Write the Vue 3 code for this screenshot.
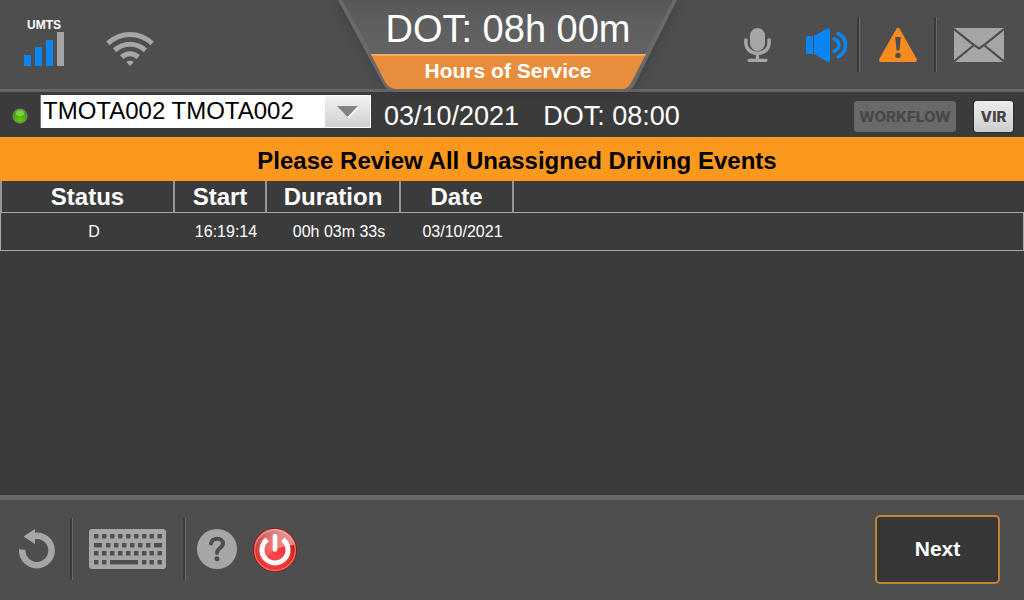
<script setup>
import { ref } from 'vue'

const drivers = ['TMOTA002 TMOTA002']
const driver = ref(drivers[0])
const columns = ['Status', 'Start', 'Duration', 'Date']
const events = [
  { status: 'D', start: '16:19:14', duration: '00h 03m 33s', date: '03/10/2021' }
]

const row = (y, xs) => xs.map((x) => ({ x, y, w: 4.4 }))
const even = [5, 13, 21, 29, 37, 45, 53, 60.500, 68.500]
const keys = [
  ...row(5, even),
  { x: 5, y: 14, w: 8 },
  ...row(14, [17, 25, 33, 41, 49, 57]),
  { x: 65, y: 14, w: 8 },
  ...row(22, even),
  ...row(31, [5, 13]),
  { x: 21, y: 31, w: 28 },
  ...row(31, [53, 60.500, 68.500])
]
</script>

<template>
  <div class="screen">
    <header class="top">
      <div class="signals">
        <div class="cell">
          <span>UMTS</span>
          <svg width="40" height="34" viewBox="0 0 40 34" aria-hidden="true">
            <path fill="#0a86f0" d="M0 23h7v11H0zM11 15h7v19h-7zM22 8h7v26h-7z" />
            <path fill="#a6a6a6" d="M33 0h7v34h-7z" />
          </svg>
        </div>
        <svg class="wifi" width="48" height="34" viewBox="0 0 48 34" aria-hidden="true">
          <g fill="none" stroke="#a6a6a6" stroke-width="5">
            <path d="M1.8 11.4Q11.5 2.5 24 2.5T46.2 11.4" />
            <path d="M8.7 18.3Q15.5 12.2 24 12.2T39.3 18.3" />
            <path d="M15.7 25Q19.5 21.7 24 21.7T32.3 25" />
          </g>
          <path fill="#a6a6a6" d="M20.3 30Q24 27.6 27.7 30L24 34z" />
        </svg>
      </div>

      <div class="clock">
        <svg class="shape" width="338" height="92" viewBox="0 0 338 92" aria-hidden="true">
          <defs>
            <linearGradient id="plate" x1="0" y1="0" x2="0" y2="1">
              <stop offset="0" stop-color="#585858" />
              <stop offset=".45" stop-color="#5f5f5f" />
              <stop offset="1" stop-color="#636363" />
            </linearGradient>
            <filter id="shade" x="-20%" y="-20%" width="140%" height="140%">
              <feGaussianBlur stdDeviation="6" />
            </filter>
          </defs>
          <path fill="#000" opacity=".2" filter="url(#shade)" d="M-2 0L45 82Q49 89 57 89H287Q294 89 298 82L340 0z" />
          <path fill="#696969" d="M0 0L45 84Q49 92 59 92H284Q293 92 297 84L339 0z" />
          <path fill="url(#plate)" d="M4 0L34 54H307L335 0z" />
          <path fill="#e88d3b" d="M33 54H308L293 83Q290 89 284 89H58Q51 89 47 82z" />
          <path fill="#fbab5c" d="M33 54H308L307 56H34z" />
        </svg>
        <div class="time">DOT: 08h 00m</div>
        <div class="label">Hours of Service</div>
      </div>

      <div class="alerts">
        <button class="mic" aria-label="Voice">
          <svg width="27" height="34" viewBox="0 0 27 34">
            <rect x="6" y="0" width="15" height="23" rx="7.5" fill="#a6a6a6" />
            <g fill="none" stroke="#a6a6a6" stroke-width="3.6" stroke-linecap="round">
              <path d="M1.9 12v2.5c0 14.5 23.2 14.5 23.2 0V12" />
              <path d="M13.5 26v6M5 32.3h17" stroke-width="3.2" />
            </g>
          </svg>
        </button>
        <button class="sound" aria-label="Volume">
          <svg width="42" height="34" viewBox="0 0 42 34">
            <path fill="#0a86f0" d="M0 9.5Q0 8 1.5 8H7V26H1.5Q0 26 0 24.500zM8 8L21 .6Q24-.8 24 2V32Q24 34.800 21 33.400L8 26z" />
            <g fill="none" stroke="#0a86f0" stroke-width="3.6" stroke-linecap="round">
              <path d="M28 11Q33 13 33 17T28 23.500" />
              <path d="M32 5.500Q39.500 9 39.500 17T32 29" />
            </g>
          </svg>
        </button>
        <i class="rule"></i>
        <button class="warn" aria-label="Warnings">
          <svg width="38" height="34" viewBox="0 0 38 34">
            <path fill="#f98b21" stroke="#f98b21" stroke-width="4" stroke-linejoin="round" d="M19 2L2 32H36z" />
            <path fill="#4e4e4e" d="M16.200 9H21.800L20.500 22.500H17.500z" />
            <circle cx="19" cy="27.500" r="2.700" fill="#4e4e4e" />
          </svg>
        </button>
        <i class="rule"></i>
        <button class="mail" aria-label="Messages">
          <svg width="50" height="34" viewBox="0 0 50 34">
            <path fill="#a6a6a6" d="M0 0H50V34H0z" />
            <path fill="none" stroke="#4e4e4e" stroke-width="2.200" d="M0 1L20 17L25 20.500L30 17L50 1M0 33.500L20 17M50 33.500L30 17" />
          </svg>
        </button>
      </div>
    </header>

    <div class="driverbar">
      <svg class="led" width="16" height="16" viewBox="0 0 16 16" aria-hidden="true">
        <defs>
          <radialGradient id="green" cx=".5" cy=".75" r=".7">
            <stop offset="0" stop-color="#62cc08" />
            <stop offset="1" stop-color="#2f9400" />
          </radialGradient>
        </defs>
        <circle cx="8" cy="8" r="7" fill="url(#green)" stroke="#7f8c7a" />
        <ellipse cx="8" cy="5" rx="4.500" ry="3" fill="#b6e77c" opacity=".55" />
      </svg>
      <div class="picker">
        <select v-model="driver" aria-label="Driver">
          <option v-for="d in drivers" :key="d">{{ d }}</option>
        </select>
        <span class="arrow">
          <svg width="22" height="12" viewBox="0 0 22 12" aria-hidden="true">
            <path fill="#fff" d="M2 1H22L12 12z" />
            <path fill="#828282" d="M0 0H21L10.500 11z" />
          </svg>
        </span>
      </div>
      <span class="date">03/10/2021</span>
      <span class="dot">DOT: 08:00</span>
      <button class="small workflow" disabled>WORKFLOW</button>
      <button class="small vir">VIR</button>
    </div>

    <div class="banner" role="alert">Please Review All Unassigned Driving Events</div>

    <main>
      <table>
        <colgroup>
          <col class="c-status" /><col class="c-start" /><col class="c-duration" /><col class="c-date" /><col />
        </colgroup>
        <thead>
          <tr>
            <th v-for="c in columns" :key="c" scope="col">{{ c }}</th>
            <td></td>
          </tr>
        </thead>
        <tbody>
          <tr v-for="e in events" :key="e.start">
            <td>{{ e.status }}</td>
            <td>{{ e.start }}</td>
            <td>{{ e.duration }}</td>
            <td>{{ e.date }}</td>
            <td></td>
          </tr>
        </tbody>
      </table>
    </main>

    <footer>
      <button class="back" aria-label="Back">
        <svg width="36" height="40" viewBox="0 0 36 40">
          <path fill="none" stroke="#a6a6a6" stroke-width="6.500" d="M3.200 20.500A14.700 14.700 0 1 0 15.500 7" />
          <path fill="#a6a6a6" d="M4.500 7.500L16 0V15z" />
        </svg>
      </button>
      <i class="rule"></i>
      <button class="keyboard" aria-label="Keyboard">
        <svg width="77" height="40" viewBox="0 0 77 40">
          <rect width="77" height="40" rx="3" fill="#a6a6a6" />
          <rect v-for="(k, i) in keys" :key="i" :x="k.x" :y="k.y" :width="k.w" height="4.400" fill="#4e4e4e" />
        </svg>
      </button>
      <i class="rule"></i>
      <button class="help" aria-label="Help">
        <svg width="40" height="40" viewBox="0 0 40 40">
          <circle cx="20" cy="20" r="20" fill="#a6a6a6" />
          <path fill="none" stroke="#4e4e4e" stroke-width="4" stroke-linecap="round" d="M14 14.500C14.500 8 26 8 26 14.500C26 19 20 19 20 24" />
          <circle cx="20" cy="29.800" r="2.500" fill="#4e4e4e" />
        </svg>
      </button>
      <button class="power" aria-label="Power">
        <svg width="46" height="46" viewBox="0 0 46 46">
          <defs>
            <radialGradient id="red" cx=".5" cy=".65" r=".55">
              <stop offset="0" stop-color="#ff4b4b" />
              <stop offset=".6" stop-color="#e33" />
              <stop offset="1" stop-color="#b81414" />
            </radialGradient>
            <linearGradient id="gloss" x1=".2" y1="1" x2=".9" y2=".1">
              <stop offset="0" stop-color="#fff" stop-opacity="0" />
              <stop offset="1" stop-color="#fff" stop-opacity=".6" />
            </linearGradient>
          </defs>
          <circle cx="23" cy="23" r="21.500" fill="url(#red)" stroke="#8a1408" stroke-width="1" />
          <circle cx="23" cy="23" r="20.400" fill="none" stroke="#f0685f" stroke-width="1.500" />
          <path fill="url(#gloss)" d="M3 21A20 20 0 0 1 42.500 18Q30 19 23 23T10 37A20 20 0 0 1 3 21z" />
          <path fill="none" stroke="#fff" stroke-width="5" d="M15.200 12.500A13 13 0 1 0 30.800 12.500" />
          <path stroke="#fff" stroke-width="4.600" stroke-linecap="round" d="M23 9V22.500" />
        </svg>
      </button>
      <button class="next">Next</button>
    </footer>
  </div>
</template>

<style>
body {
  background: #3b3b3b;
}
</style>

<style scoped>
.screen {
  display: flex;
  flex-direction: column;
  min-height: 100vh;
  background: #3b3b3b;
  color: #fff;
  font-family: "Liberation Sans", Arial, sans-serif;
}
button {
  padding: 0;
  border: 0;
  background: none;
  font-family: inherit;
  color: inherit;
}
svg {
  display: block;
  flex: none;
}
.top {
  display: grid;
  grid-template-columns: 1fr 338px 1fr;
  box-sizing: border-box;
  height: 92px;
  padding-right: 10px;
  background: #4e4e4e;
  border-bottom: 3px solid #666;
}
.signals {
  display: flex;
  align-items: flex-end;
  gap: 42px;
  padding: 0 0 23px 24px;
}
.cell span {
  display: block;
  text-align: center;
  font-weight: bold;
  font-size: 12px;
  line-height: 14px;
}
.clock {
  position: relative;
  text-align: center;
}
.shape {
  position: absolute;
  left: 0;
  top: 0;
  overflow: visible;
}
.time {
  position: relative;
  padding: 6px 0 0 2px;
  font-size: 38px;
  line-height: 46px;
}
.label {
  position: relative;
  padding: 6px 0 0 2px;
  font-size: 21px;
  font-weight: bold;
  line-height: 26px;
}
.alerts {
  display: flex;
  align-items: center;
  justify-content: flex-end;
  padding-right: 10px;
}
.rule {
  width: 1px;
  height: 55px;
  border-left: 2px solid #3c3c3c;
  background: #6a6a6a;
}
.sound {
  margin: 0 9px 0 35px;
}
.warn {
  margin: 0 17px 0 19px;
}
.mail {
  margin-left: 17px;
}
.driverbar {
  display: flex;
  align-items: center;
  box-sizing: border-box;
  height: 45px;
  padding: 3px 11px 0 12px;
  font-size: 27px;
  line-height: 34px;
}
.picker {
  position: relative;
  align-self: flex-start;
  width: 331px;
  height: 33px;
  margin: 0 13px 0 12px;
}
.picker select {
  appearance: none;
  display: block;
  width: 100%;
  height: 100%;
  padding: 0 48px 2px 2px;
  border: 0;
  border-left: 1px solid #777;
  border-radius: 0;
  background: #fff;
  color: #000;
  font: 24px "Liberation Sans", Arial, sans-serif;
}
.arrow {
  position: absolute;
  right: 1px;
  top: 1px;
  bottom: 1px;
  display: flex;
  align-items: center;
  justify-content: center;
  width: 45px;
  background: linear-gradient(#f3f3f3, #cfcfcf);
  pointer-events: none;
}
.date {
  margin-right: 24px;
}
.small {
  height: 31px;
  margin-top: 1px;
  border-radius: 3px;
  font: 800 15px Inter, sans-serif;
}
.workflow {
  width: 102px;
  margin-left: auto;
  background: #696969;
  color: #484848;
}
.vir {
  width: 39px;
  margin-left: 18px;
  background: linear-gradient(#ececec, #cdcdcd);
  color: #444;
  box-shadow: 0 0 2px #111;
}
.banner {
  padding: 4px 0 0 10px;
  background: #fb991e;
  color: #000;
  font-size: 24px;
  font-weight: bold;
  line-height: 40px;
  text-align: center;
}
main {
  flex: 1;
}
table {
  width: 100%;
  table-layout: fixed;
  border-spacing: 0;
}
.c-status { width: 173px; }
.c-start { width: 92px; }
.c-duration { width: 134px; }
.c-date { width: 113px; }
th,
td {
  padding: 0;
  text-align: center;
}
thead th,
thead td {
  height: 31px;
  border-left: 2px solid #979797;
  border-bottom: 1px solid #a8a8a8;
  font-size: 24px;
  line-height: 31px;
}
tbody td {
  height: 37px;
  padding-left: 14px;
  border-bottom: 1px solid #a8a8a8;
  font-size: 16px;
}
tbody td:first-child {
  border-left: 1px solid #a8a8a8;
}
tbody td:last-child {
  border-right: 1px solid #a8a8a8;
}
footer {
  display: flex;
  align-items: center;
  box-sizing: border-box;
  height: 105px;
  padding: 0 24px 2px 19px;
  background: #4e4e4e;
  border-top: 5px solid #666;
}
footer .rule {
  height: 62px;
}
.back {
  margin-right: 15px;
}
.keyboard {
  margin: 0 17px 0 16px;
}
.help {
  margin: 0 15px 0 11px;
}
.power {
  margin-top: 2px;
}
.next {
  width: 125px;
  height: 69px;
  margin-left: auto;
  border: 2px solid #c87f37;
  border-radius: 5px;
  background: #363636;
  font-size: 21px;
  font-weight: bold;
}
</style>
